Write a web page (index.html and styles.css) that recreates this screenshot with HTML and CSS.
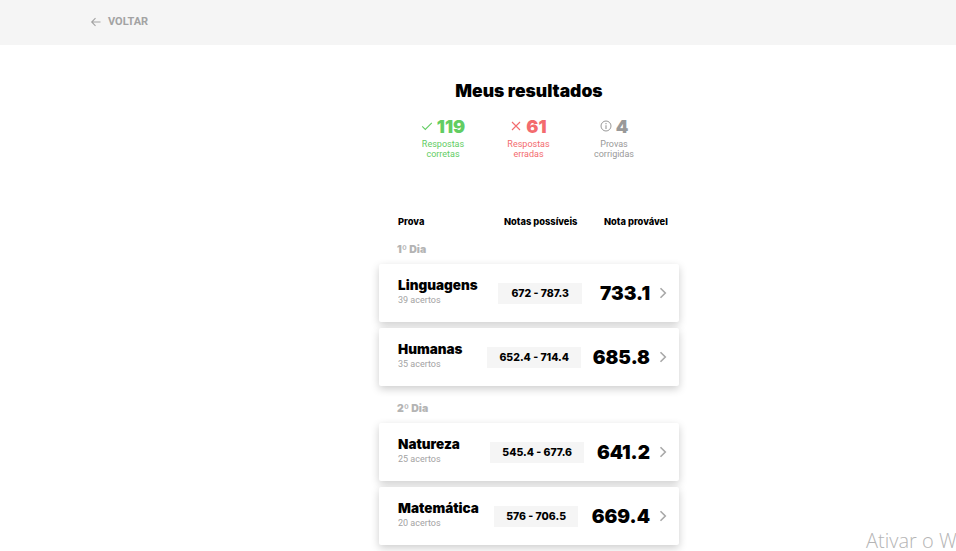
FILE: index.html
```html
<!DOCTYPE html>
<html>
<head>
    <title>Meus resultados</title>
    <link rel="stylesheet" href="styles.css">
</head>
<body>
    <header class="topbar">
        <a class="back">
            <svg class="back-icon" width="12" height="12" viewBox="0 0 12 12"><path d="M10.5 6H1.8M5.5 2.2 1.7 6l3.8 3.8" fill="none" stroke="currentColor" stroke-width="1.1"/></svg>
            VOLTAR
        </a>
    </header>

    <main class="content">
        <h1 class="title">Meus resultados</h1>

        <div class="summary">
            <div class="stat stat-green">
                <div class="stat-top">
                    <svg width="12" height="12" viewBox="0 0 12 12"><path d="M1.2 6.4 4.3 9.4 10.8 2.8" fill="none" stroke="currentColor" stroke-width="1.1"/></svg>
                    <span class="stat-num">119</span>
                </div>
                <div class="stat-label">Respostas<br>corretas</div>
            </div>
            <div class="stat stat-red">
                <div class="stat-top">
                    <svg width="12" height="12" viewBox="0 0 12 12"><path d="M2 2 10 10M10 2 2 10" fill="none" stroke="currentColor" stroke-width="1.1"/></svg>
                    <span class="stat-num">61</span>
                </div>
                <div class="stat-label">Respostas<br>erradas</div>
            </div>
            <div class="stat stat-gray">
                <div class="stat-top">
                    <svg width="12" height="12" viewBox="0 0 12 12"><circle cx="6" cy="6" r="5" fill="none" stroke="currentColor" stroke-width="1"/><path d="M6 5.2V9M6 3v1.2" fill="none" stroke="currentColor" stroke-width="1.1"/></svg>
                    <span class="stat-num">4</span>
                </div>
                <div class="stat-label">Provas<br>corrigidas</div>
            </div>
        </div>

        <div class="table-head">
            <span class="head-name">Prova</span>
            <span class="head-range">Notas possíveis</span>
            <span class="head-score">Nota provável</span>
        </div>

        <div class="day">1º Dia</div>
        <div class="card card-linguagens">
            <div class="card-name"><strong>Linguagens</strong><span>39 acertos</span></div>
            <div class="range">672 - 787.3</div>
            <div class="score">733.1</div>
            <svg class="chevron" width="8" height="12" viewBox="0 0 8 12"><path d="M1.5 1.2 6.3 6 1.5 10.8" fill="none" stroke="currentColor" stroke-width="1.6"/></svg>
        </div>
        <div class="card card-humanas">
            <div class="card-name"><strong>Humanas</strong><span>35 acertos</span></div>
            <div class="range">652.4 - 714.4</div>
            <div class="score">685.8</div>
            <svg class="chevron" width="8" height="12" viewBox="0 0 8 12"><path d="M1.5 1.2 6.3 6 1.5 10.8" fill="none" stroke="currentColor" stroke-width="1.6"/></svg>
        </div>

        <div class="day day-second">2º Dia</div>
        <div class="card card-natureza">
            <div class="card-name"><strong>Natureza</strong><span>25 acertos</span></div>
            <div class="range">545.4 - 677.6</div>
            <div class="score">641.2</div>
            <svg class="chevron" width="8" height="12" viewBox="0 0 8 12"><path d="M1.5 1.2 6.3 6 1.5 10.8" fill="none" stroke="currentColor" stroke-width="1.6"/></svg>
        </div>
        <div class="card card-matematica">
            <div class="card-name"><strong>Matemática</strong><span>20 acertos</span></div>
            <div class="range">576 - 706.5</div>
            <div class="score">669.4</div>
            <svg class="chevron" width="8" height="12" viewBox="0 0 8 12"><path d="M1.5 1.2 6.3 6 1.5 10.8" fill="none" stroke="currentColor" stroke-width="1.6"/></svg>
        </div>
    </main>

    <div class="watermark">Ativar o W</div>
</body>
</html>
```

FILE: styles.css
```css
html, body {
    height: 551px;
    overflow: hidden;
}

body {
    margin: 0;
    background-color: #fff;
    font-family: Inter, "Liberation Sans", sans-serif;
    color: #000;
}

.topbar {
    height: 45px;
    background-color: #f5f5f5;
    display: flex;
    align-items: center;
    padding-left: 90px;
    padding-bottom: 1px;
    box-sizing: border-box;
}

.back {
    display: flex;
    align-items: center;
    gap: 6px;
    font-family: Roboto, sans-serif;
    font-size: 11px;
    font-weight: 700;
    color: #a3a3a3;
    padding-bottom: 2px;
}

.back-icon {
    margin-top: 2px;
}

.content {
    width: 300px;
    margin-left: 379px;
}

.title {
    margin: 35px 0 0;
    font-size: 17.5px;
    line-height: 22px;
    font-weight: 900;
    text-align: center;
}

.summary {
    display: flex;
    justify-content: center;
    gap: 43px;
    margin-top: 14px;
    margin-left: -1px;
}

.stat {
    width: 42.5px;
    display: flex;
    flex-direction: column;
    align-items: center;
}

.stat-top {
    display: flex;
    align-items: center;
    gap: 4px;
    white-space: nowrap;
    height: 20px;
}

.stat-num {
    font-size: 18px;
    font-weight: 900;
}

.stat-label {
    margin-top: 3px;
    font-family: Roboto, sans-serif;
    font-size: 9px;
    line-height: 10px;
    text-align: center;
}

.stat-green { color: #62cd63; }
.stat-red { color: #f36b6e; }
.stat-gray { color: #999; }

.table-head {
    display: flex;
    margin-top: 57px;
    padding-left: 19px;
    font-size: 9.3px;
    line-height: 12px;
    font-weight: 800;
}

.head-name { width: 106px; }
.head-range { width: 100px; }

.day {
    margin: 16px 0 8px 18px;
    font-size: 10.5px;
    line-height: 12px;
    font-weight: 900;
    color: #b4b4b4;
}

.day-second {
    margin-top: 17px;
}

.card {
    height: 58px;
    margin-bottom: 6px;
    background-color: #fff;
    border-radius: 2px;
    box-shadow: 0 3px 8px rgba(0, 0, 0, 0.2);
    display: flex;
    align-items: center;
    padding: 0 12px 0 19px;
}

.card-name {
    flex: 1;
    display: flex;
    flex-direction: column;
    padding-bottom: 1px;
}

.card-name strong {
    font-size: 13.5px;
    line-height: 15px;
    font-weight: 900;
}

.card-name span {
    margin-top: 1px;
    font-family: Roboto, sans-serif;
    font-size: 9px;
    line-height: 13px;
    color: #a3a3a3;
}

.range {
    padding: 0 12px;
    height: 21px;
    line-height: 21px;
    background-color: #f5f5f5;
    font-size: 10.5px;
    font-weight: 800;
}

.card-linguagens .range { padding: 0 13px; }

.score {
    text-align: right;
    font-size: 19px;
    font-weight: 900;
}

.card-linguagens .score { width: 68px; }
.card-humanas .score { width: 69px; }
.card-natureza .score { width: 66px; }
.card-matematica .score { width: 72px; }

.chevron {
    margin-left: 9px;
    color: #a8a8a8;
}

.watermark {
    position: absolute;
    left: 866px;
    top: 528px;
    font-family: "Open Sans", sans-serif;
    font-weight: 300;
    font-size: 20px;
    line-height: 26px;
    color: #b5b5b5;
    white-space: nowrap;
}
```
